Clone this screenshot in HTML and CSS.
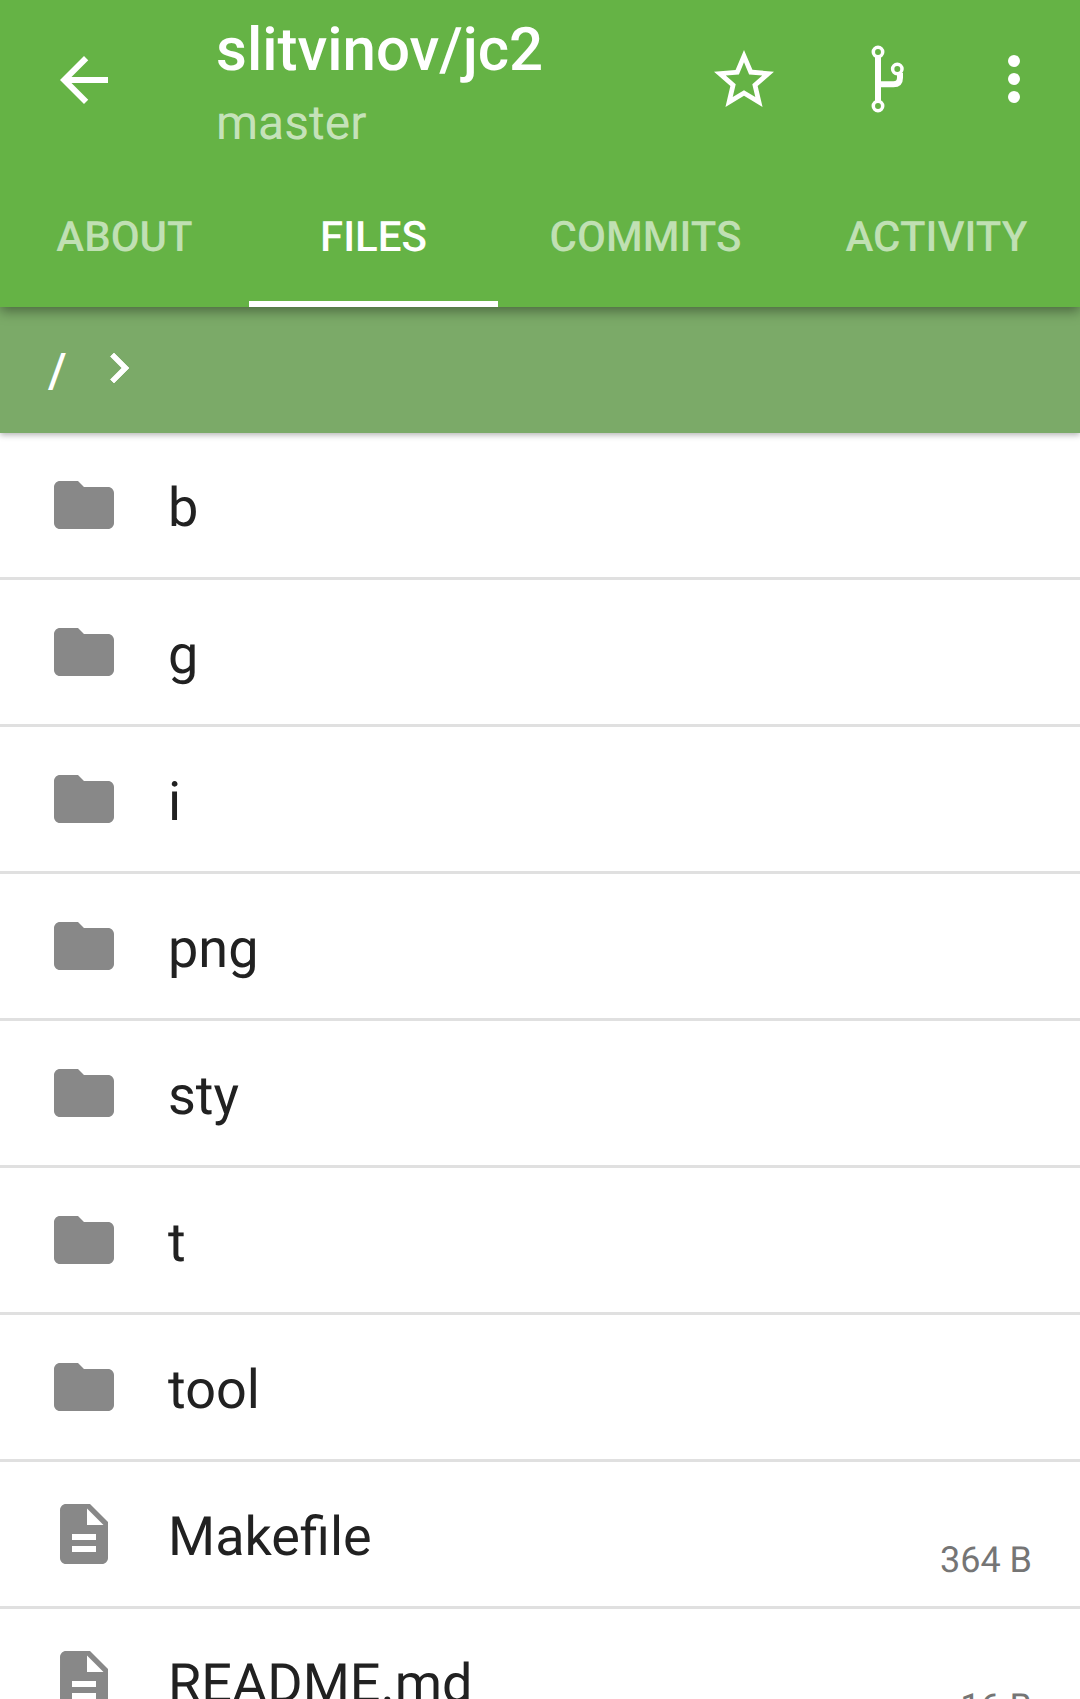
FILE: index.html
```html
<!DOCTYPE html>
<html lang="en">
<head>
    <meta charset="UTF-8" />
    <title>slitvinov/jc2</title>
    <link rel="stylesheet" href="styles.css">
</head>
<body>
    <header class="appbar">
        <div class="toolbar">
            <svg class="icon" viewBox="0 0 24 24"><path d="M20 11H7.83l5.59-5.59L12 4l-8 8 8 8 1.41-1.41L7.83 13H20v-2z"/></svg>
            <div class="heading">
                <div class="title">slitvinov/jc2</div>
                <div class="subtitle">master</div>
            </div>
            <div class="actions">
                <svg class="icon" viewBox="0 0 24 24"><path d="M22 9.24l-7.19-.62L12 2 9.19 8.63 2 9.24l5.46 4.73L5.82 21 12 17.27 18.18 21l-1.63-7.03L22 9.24zM12 15.4l-3.76 2.27 1-4.28-3.32-2.88 4.38-.38L12 6.1l1.71 4.04 4.38.38-3.32 2.88 1 4.28L12 15.4z"/></svg>
                <svg class="icon" viewBox="0 0 72 72">
                    <g class="branch">
                        <path d="M35 13V57"/>
                        <path d="M35 40.300H50.500Q57 40.300 57 33.800V29"/>
                        <circle cx="35" cy="8" r="4.700"/>
                        <circle cx="54.300" cy="25" r="4.700"/>
                        <circle cx="35" cy="62" r="4.700"/>
                    </g>
                </svg>
                <svg class="icon" viewBox="0 0 72 72"><circle cx="36" cy="17" r="6"/><circle cx="36" cy="35" r="6"/><circle cx="36" cy="53" r="6"/></svg>
            </div>
        </div>
        <nav class="tabs">
            <div class="tab">ABOUT</div>
            <div class="tab active">FILES</div>
            <div class="tab">COMMITS</div>
            <div class="tab">ACTIVITY</div>
        </nav>
    </header>

    <div class="crumbs">
        <span class="crumb">/</span>
        <svg class="chevron" viewBox="0 0 24 24"><path d="M10 6L8.59 7.41 13.17 12l-4.58 4.59L10 18l6-6z"/></svg>
    </div>

    <ul class="files">
        <li class="row"><svg class="icon-row" viewBox="0 0 24 24"><use href="#folder"/></svg><span class="name">b</span></li>
        <li class="row"><svg class="icon-row" viewBox="0 0 24 24"><use href="#folder"/></svg><span class="name">g</span></li>
        <li class="row"><svg class="icon-row" viewBox="0 0 24 24"><use href="#folder"/></svg><span class="name">i</span></li>
        <li class="row"><svg class="icon-row" viewBox="0 0 24 24"><use href="#folder"/></svg><span class="name">png</span></li>
        <li class="row"><svg class="icon-row" viewBox="0 0 24 24"><use href="#folder"/></svg><span class="name">sty</span></li>
        <li class="row"><svg class="icon-row" viewBox="0 0 24 24"><use href="#folder"/></svg><span class="name">t</span></li>
        <li class="row"><svg class="icon-row" viewBox="0 0 24 24"><use href="#folder"/></svg><span class="name">tool</span></li>
        <li class="row"><svg class="icon-row" viewBox="0 0 24 24"><use href="#doc"/></svg><span class="name">Makefile</span><span class="size">364 B</span></li>
        <li class="row"><svg class="icon-row" viewBox="0 0 24 24"><use href="#doc"/></svg><span class="name">README.md</span><span class="size">16 B</span></li>
    </ul>

    <svg class="defs" width="0" height="0">
        <defs>
            <path id="folder" d="M10 4H4c-1.1 0-2 .9-2 2v12c0 1.100.9 2 2 2h16c1.100 0 2-.9 2-2V8c0-1.100-.9-2-2-2h-8l-2-2z"/>
            <path id="doc" d="M14 2H6c-1.100 0-1.990.9-1.990 2L4 20c0 1.100.89 2 1.990 2H18c1.100 0 2-.9 2-2V8l-6-6zm2 16H8v-2h8v2zm0-4H8v-2h8v2zm-3-5V3.500L18.500 9H13z"/>
        </defs>
    </svg>
</body>
</html>
```

FILE: styles.css
```css
* {
    box-sizing: border-box;
}
html, body {
    margin: 0;
    height: 1699px;
    overflow: hidden;
}
body {
    background: #fff;
    font-family: Roboto, sans-serif;
    text-rendering: geometricPrecision;
}
.appbar {
    position: relative;
    z-index: 2;
    background: #65b345;
    box-shadow: 0 4px 12px rgba(0,0,0,0.4);
}
.toolbar {
    display: flex;
    align-items: center;
    height: 160px;
    padding: 0 30px 0 48px;
}
.icon {
    width: 72px;
    height: 72px;
    fill: #fff;
    flex: none;
}
.heading {
    margin-left: 96px;
    padding-top: 6px;
}
.title {
    font-size: 60px;
    line-height: 72px;
    font-weight: 500;
    color: #fff;
}
.subtitle {
    font-size: 48px;
    line-height: 60px;
    margin-top: 7px;
    color: rgba(255,255,255,0.65);
}
.actions {
    display: flex;
    margin-left: auto;
    gap: 63px;
}
.branch {
    fill: none;
    stroke: #fff;
    stroke-width: 3.5;
}
.branch path {
    stroke-width: 6;
}
.tabs {
    display: grid;
    grid-template-columns: 249px 249px 295px 287px;
    height: 147px;
}
.tab {
    display: flex;
    align-items: center;
    justify-content: center;
    padding-top: 7px;
    font-size: 42px;
    font-weight: 500;
    color: rgba(255,255,255,0.6);
}
.tab.active {
    color: #fff;
    box-shadow: inset 0 -6px 0 #fff;
}
.crumbs {
    position: relative;
    z-index: 1;
    display: flex;
    align-items: center;
    height: 126px;
    padding-left: 48px;
    background: #7baa68;
    box-shadow: 0 2px 6px rgba(0,0,0,0.3);
}
.crumb {
    font-size: 48px;
    font-weight: 500;
    color: #fff;
}
.chevron {
    width: 60px;
    height: 60px;
    margin-left: 22px;
    margin-bottom: 4px;
    fill: #fff;
    stroke: #fff;
    stroke-width: 0.3;
}
.files {
    list-style: none;
    margin: 0;
    padding: 0;
}
.row {
    display: flex;
    align-items: center;
    height: 147px;
    padding: 0 48px;
    border-bottom: 3px solid #e0e0e0;
}
.icon-row {
    width: 72px;
    height: 72px;
    flex: none;
    fill: #888;
}
.name {
    margin-left: 48px;
    padding-top: 6px;
    font-size: 54px;
    color: #212121;
}
.size {
    margin-left: auto;
    align-self: flex-end;
    margin-bottom: 25px;
    font-size: 36px;
    color: #757575;
}
.defs {
    position: absolute;
}
```
